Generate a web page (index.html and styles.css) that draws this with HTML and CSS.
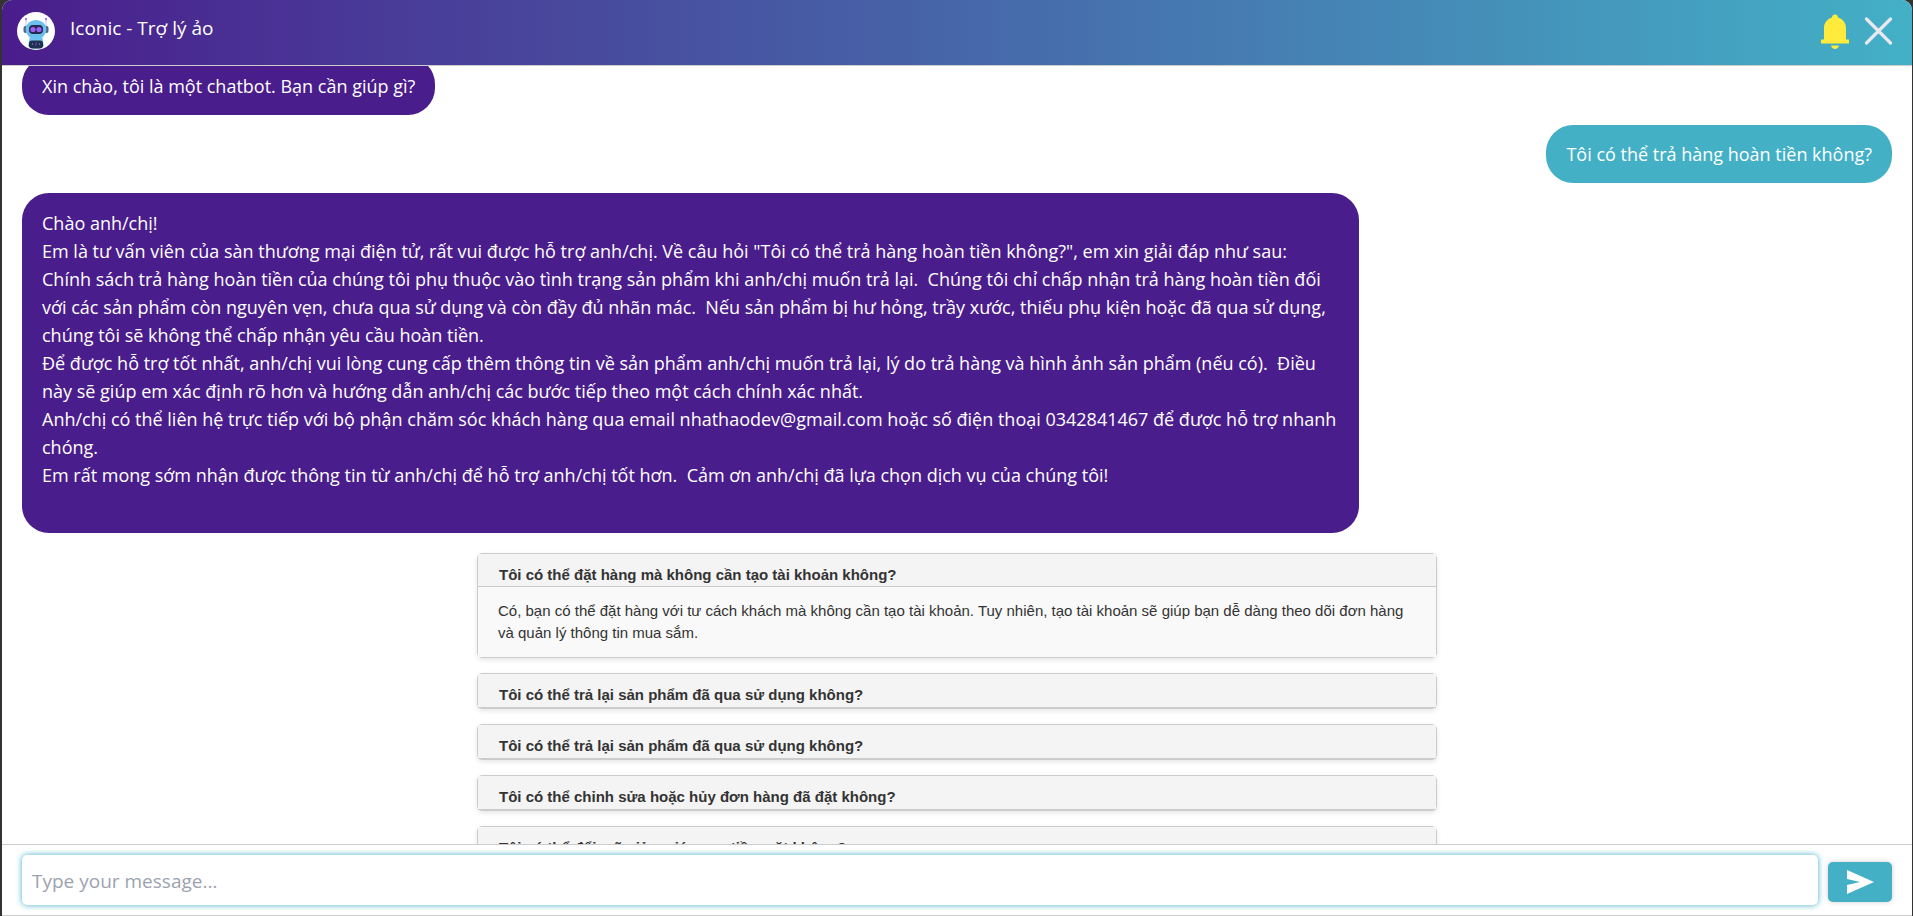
FILE: index.html
```html
<!DOCTYPE html>
<html lang="vi">
<head>
<meta charset="utf-8">
<title>Iconic - Trợ lý ảo</title>
<link rel="stylesheet" href="styles.css">
</head>
<body>
<main class="chat">
  <header class="chat-header">
    <svg class="avatar" viewBox="0 0 38 38" aria-hidden="true">
      <circle cx="19" cy="19" r="19" fill="#fff"/>
      <path d="M9 8v8M29 8v8" stroke="#c9bdf0" stroke-width="1"/>
      <circle cx="9" cy="7" r="1.2" fill="#a77be8"/><circle cx="29" cy="7" r="1.2" fill="#a77be8"/>
      <rect x="6.500" y="14" width="4" height="7" rx="2" fill="#4b6585"/><rect x="27.500" y="14" width="4" height="7" rx="2" fill="#4b6585"/>
      <path d="M13 24h12l2 10q-8 6-16 0z" fill="#6cc5f0"/>
      <ellipse cx="19" cy="17.500" rx="10.500" ry="9.500" fill="#6cc0ee"/>
      <rect x="12" y="13" width="14" height="9" rx="4" fill="#242a52"/>
      <circle cx="16" cy="17.500" r="2.600" fill="#9b62f2"/><circle cx="22" cy="17.500" r="2.600" fill="#9b62f2"/>
      <rect x="12" y="28.500" width="14" height="8" rx="3" fill="#22304f"/>
      <path d="M16 31l-1 1 1 1M22 31l1 1-1 1M19.500 30.500l-1 3" stroke="#7657b8" stroke-width="1" fill="none"/>
    </svg>
    <h1 class="chat-title">Iconic - Trợ lý ảo</h1>
    <div class="header-actions">
      <button class="icon-button" type="button" aria-label="Thông báo">
        <svg class="bell" viewBox="0 0 28 34" aria-hidden="true">
          <path fill="#ffeb3b" d="M14 0c-1.700 0-3 1.200-3 3C6 4.500 3 8.500 3 13.500V25H0v4h28v-4h-3V13.500C25 8.500 22 4.500 17 3c0-1.800-1.300-3-3-3zM10 31h8c-.5 2-2 3.500-4 3.500S10.500 33 10 31z"/>
        </svg>
      </button>
      <button class="icon-button" type="button" aria-label="Đóng">
        <svg class="close" viewBox="0 0 28 28" aria-hidden="true">
          <path d="M2 2l24 24M26 2L2 26" stroke="#e8e8ee" stroke-width="3.200" stroke-linecap="round"/>
        </svg>
      </button>
    </div>
  </header>

  <section class="messages" id="messages">
    <div class="bubble bot">Xin chào, tôi là một chatbot. Bạn cần giúp gì?</div>
    <div class="bubble user">Tôi có thể trả hàng hoàn tiền không?</div>
    <div class="bubble bot long">Chào anh/chị!
Em là tư vấn viên của sàn thương mại điện tử, rất vui được hỗ trợ anh/chị. Về câu hỏi "Tôi có thể trả hàng hoàn tiền không?", em xin giải đáp như sau:
Chính sách trả hàng hoàn tiền của chúng tôi phụ thuộc vào tình trạng sản phẩm khi anh/chị muốn trả lại.  Chúng tôi chỉ chấp nhận trả hàng hoàn tiền đối với các sản phẩm còn nguyên vẹn, chưa qua sử dụng và còn đầy đủ nhãn mác.  Nếu sản phẩm bị hư hỏng, trầy xước, thiếu phụ kiện hoặc đã qua sử dụng, chúng tôi sẽ không thể chấp nhận yêu cầu hoàn tiền.
Để được hỗ trợ tốt nhất, anh/chị vui lòng cung cấp thêm thông tin về sản phẩm anh/chị muốn trả lại, lý do trả hàng và hình ảnh sản phẩm (nếu có).  Điều này sẽ giúp em xác định rõ hơn và hướng dẫn anh/chị các bước tiếp theo một cách chính xác nhất.
Anh/chị có thể liên hệ trực tiếp với bộ phận chăm sóc khách hàng qua email nhathaodev@gmail.com hoặc số điện thoại 0342841467 để được hỗ trợ nhanh chóng.
Em rất mong sớm nhận được thông tin từ anh/chị để hỗ trợ anh/chị tốt hơn.  Cảm ơn anh/chị đã lựa chọn dịch vụ của chúng tôi!

</div>
    <div class="faq">
      <details class="faq-item" open>
        <summary class="faq-question">Tôi có thể đặt hàng mà không cần tạo tài khoản không?</summary>
        <p class="faq-answer">Có, bạn có thể đặt hàng với tư cách khách mà không cần tạo tài khoản. Tuy nhiên, tạo tài khoản sẽ giúp bạn dễ dàng theo dõi đơn hàng và quản lý thông tin mua sắm.</p>
      </details>
      <details class="faq-item">
        <summary class="faq-question">Tôi có thể trả lại sản phẩm đã qua sử dụng không?</summary>
      </details>
      <details class="faq-item">
        <summary class="faq-question">Tôi có thể trả lại sản phẩm đã qua sử dụng không?</summary>
      </details>
      <details class="faq-item">
        <summary class="faq-question">Tôi có thể chỉnh sửa hoặc hủy đơn hàng đã đặt không?</summary>
      </details>
      <details class="faq-item">
        <summary class="faq-question">Tôi có thể đổi mã giảm giá sang tiền mặt không?</summary>
      </details>
    </div>
  </section>

  <form class="composer">
    <input class="message-input" id="message" type="text" placeholder="Type your message..." aria-label="Type your message" autofocus>
    <button class="send" type="submit" aria-label="Gửi">
      <svg class="send-icon" viewBox="0 0 27 24" aria-hidden="true"><path fill="#fff" d="M0 0l27 12L0 24v-9l13-3L0 9z"/></svg>
    </button>
  </form>
</main>
<script src="chat.js"></script>
</body>
</html>
```
FILE: styles.css
```css
* { box-sizing: border-box; }

body {
  margin: 0;
  padding: 0 1px 0 2px;
  background: #333;
  font-family: "Segoe UI", "Open Sans", "Noto Sans", sans-serif;
}

.chat {
  display: flex;
  flex-direction: column;
  height: 100vh;
  background: #fff;
  border-bottom: 1px solid #ccc;
  border-radius: 10px 10px 0 0;
  overflow: hidden;
}

.chat-header {
  display: flex;
  flex: none;
  align-items: flex-start;
  gap: 15px;
  height: 66px;
  padding: 12px 19px 0 15px;
  border-bottom: 1px solid #ccc;
  background: linear-gradient(90deg, #4a1d8c, #43b0c6);
}

.avatar { width: 38px; height: 38px; }

.chat-title {
  margin: 0;
  color: #fff;
  font-size: 19px;
  font-weight: 400;
  line-height: 32px;
}

.header-actions {
  display: flex;
  align-items: center;
  gap: 15px;
  height: 38px;
  margin-left: auto;
}

.icon-button {
  display: flex;
  padding: 0;
  border: 0;
  background: none;
}

.bell { width: 28px; height: 35px; }
.close { width: 29px; height: 28px; }

.messages {
  display: flex;
  flex: 1;
  flex-direction: column;
  gap: 10px;
  min-height: 0;
  padding: 20px;
  overflow-y: auto;
  scrollbar-width: none;
}

.bubble {
  flex: none;
  max-width: 1337px;
  padding: 15px 20px;
  border-radius: 27px;
  color: #fff;
  font-size: 18px;
  line-height: 28px;
  white-space: pre-wrap;
}

.bot { align-self: flex-start; background: #4a1d8c; }
.user { align-self: flex-end; background: #43b0c6; }
.long { padding: 16px 20px; }

.faq {
  flex: none;
  align-self: center;
  width: 960px;
  max-width: 100%;
  padding: 10px 0 20px;
  color: #333;
  font-family: Arial, "Liberation Sans", sans-serif;
}

.faq-item {
  margin-bottom: 15px;
  border: 1px solid #ccc;
  border-radius: 5px;
  box-shadow: 0 2px 5px rgba(0, 0, 0, 0.1);
}

.faq-question {
  padding: 10px 21px 1px;
  border-bottom: 1px solid #ccc;
  background: #f4f4f4;
  font-size: 15px;
  font-weight: 700;
  line-height: 22px;
  list-style: none;
}

.faq-answer {
  margin: 0;
  padding: 13px 20px;
  background: #f9f9f9;
  font-size: 15px;
  line-height: 22px;
}

.faq-item[open] .faq-question { padding-bottom: 0; }

.composer {
  display: flex;
  flex: none;
  align-items: center;
  gap: 10px;
  padding: 10px 20px;
  border-top: 1px solid #ccc;
}

.message-input {
  flex: 1;
  height: 50px;
  padding: 2px 10px 0;
  border: 0;
  border-radius: 5px;
  outline: 0;
  background: #fff;
  box-shadow: 0 0 6px #43b0c6;
  caret-color: #000;
  color: #333;
  font-family: inherit;
  font-size: 19px;
}

.message-input::placeholder { color: #9ca3af; }

.send {
  display: flex;
  align-items: center;
  justify-content: center;
  width: 64px;
  height: 40px;
  margin-top: 4px;
  padding: 0;
  border: 0;
  border-radius: 5px;
  background: #43b0c6;
  box-shadow: 0 0 5px rgba(0, 0, 0, 0.2);
}

.send-icon { width: 27px; height: 24px; }
```
FILE: chat.js
```js
document.getElementById("messages").scrollTop = 29;
document.getElementById("message").focus({ preventScroll: true });
```
